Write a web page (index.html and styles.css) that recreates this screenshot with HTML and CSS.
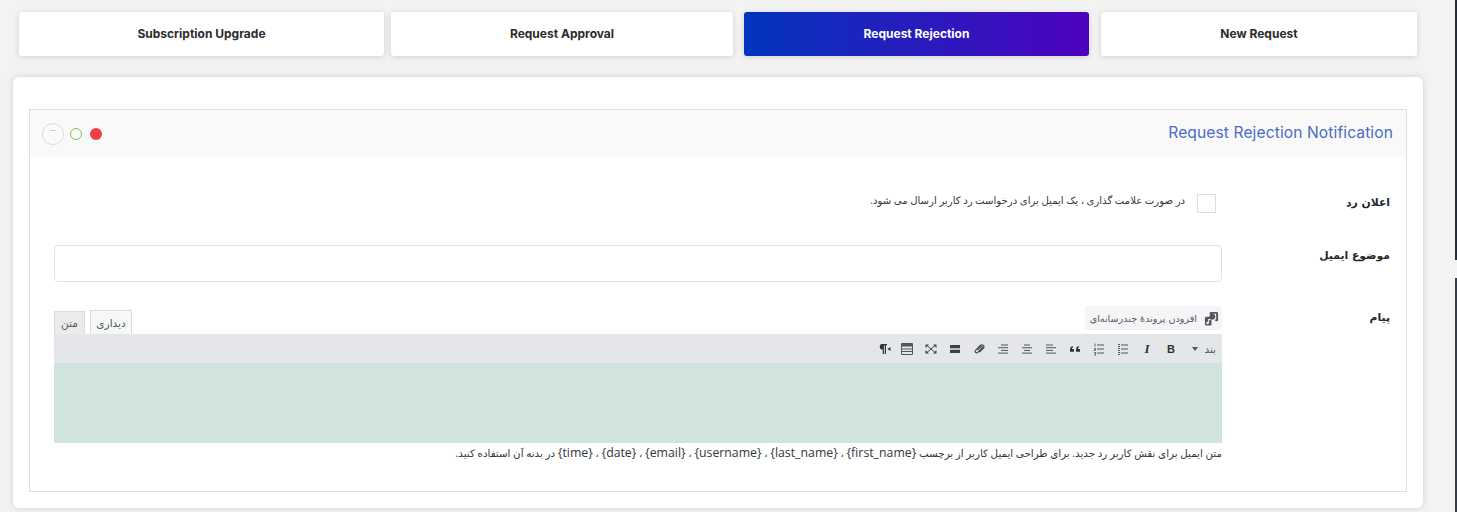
FILE: index.html
```html
<!DOCTYPE html>
<html lang="fa">
<head>
<meta charset="utf-8">
<title>Request Rejection Notification</title>
<link rel="stylesheet" href="styles.css">
</head>
<body>
<main class="page">
  <nav class="tabs">
    <a class="tab tab-a">Subscription Upgrade</a>
    <a class="tab tab-b">Request Approval</a>
    <a class="tab tab-c active">Request Rejection</a>
    <a class="tab tab-d">New Request</a>
  </nav>
  <section class="card">
    <div class="box">
      <header class="box-head">
        <div class="dots">
          <span class="dot collapse"><i></i></span>
          <span class="dot green"></span>
          <span class="dot red"></span>
        </div>
        <h2 class="title">Request Rejection Notification</h2>
      </header>
      <div class="form" dir="rtl">
        <div class="row row-check">
          <label class="label">اعلان رد</label>
          <div class="field check-field">
            <span class="checkbox"></span>
            <span class="check-text">در صورت علامت گذاری ، یک ایمیل برای درخواست رد کاربر ارسال می شود.</span>
          </div>
        </div>
        <div class="row row-subject">
          <label class="label">موضوع ایمیل</label>
          <div class="field"><input class="input" type="text"></div>
        </div>
        <div class="row">
          <label class="label label-msg">پیام</label>
          <div class="field">
            <div class="editor-top">
              <button class="media" type="button">
                <svg class="media-icon" viewBox="0 0 16 16" width="15" height="15"><path d="M6 2.500C6 1.700 6.700 1 7.500 1h6c.8 0 1.500.7 1.500 1.500v7c0 .8-.7 1.500-1.500 1.500H12V9h1V3H8v1H6z" fill="#50575e"/><circle cx="9" cy="6" r="3" fill="#50575e"/><path d="M1 7.500C1 6.700 1.700 6 2.500 6H8v8.500c0 .6-.5 1-1 1H2.500C1.700 15.500 1 14.800 1 14z" fill="#50575e"/><circle cx="3.800" cy="12.800" r="1.300" fill="#f5f5f7"/><path d="M4.500 12.800V8.500H7v1.300H5.500v3z" fill="#f5f5f7"/></svg>
                <span>افزودن پروندهٔ چندرسانه‌ای</span>
              </button>
              <div class="modes">
                <span class="mode mode-on">دیداری</span>
                <span class="mode">متن</span>
              </div>
            </div>
            <div class="toolbar">
              <span class="format">بند<i class="caret"></i></span>
              <span class="tool tool-b">B</span>
              <span class="tool tool-i">I</span>
              <span class="tool"><svg viewBox="0 0 14 14" width="14" height="14"><path d="M5 3h7M5 7h7M5 11h7" stroke="#50575e"/><path d="M2 2h2v1H2zM2 4h2v1H2zM2 6h2v1H2zM2 8h2v1H2zM2 10h2v1H2zM2 12h2v1H2z" fill="#50575e"/></svg></span>
              <span class="tool"><svg viewBox="0 0 14 14" width="14" height="14"><path d="M5 3h7M5 7h7M5 11h7" stroke="#50575e"/><path d="M3 1.500v3M2 6.500h1.500v1.700H2v.8M2 10.500h1.500v2.500H2" stroke="#50575e" stroke-width=".9" fill="none"/></svg></span>
              <span class="tool"><svg viewBox="0 0 14 14" width="14" height="14"><path d="M2 9.800V7.400C2 5.600 3 4.500 5 4.200v1.400c-.8.2-1.200.6-1.200 1.300H6v2.900zM8 9.800V7.400c0-1.800 1-2.900 3-3.200v1.400c-.8.2-1.200.6-1.200 1.300H12v2.900z" fill="#2c3338"/></svg></span>
              <span class="tool"><svg viewBox="0 0 14 14" width="14" height="14"><path d="M2 3h7M2 5.700h10M2 8.400h7M2 11.100h10" stroke="#50575e"/></svg></span>
              <span class="tool"><svg viewBox="0 0 14 14" width="14" height="14"><path d="M4 3h6M2 5.700h10M4 8.400h6M2 11.100h10" stroke="#50575e"/></svg></span>
              <span class="tool"><svg viewBox="0 0 14 14" width="14" height="14"><path d="M5 3h7M2 5.700h10M5 8.400h7M2 11.100h10" stroke="#50575e"/></svg></span>
              <span class="tool"><svg viewBox="0 0 14 14" width="14" height="14"><path d="M5.500 8.200 9 4.600c.8-.8 2 .4 1.200 1.200L5.800 10.300c-1.500 1.500-3.600-.6-2.100-2.100L8.300 3.500c2.200-2.200 5 .7 2.900 2.900L7.500 10.200" stroke="#40464d" stroke-width="1.100" fill="none"/></svg></span>
              <span class="tool"><svg viewBox="0 0 14 14" width="14" height="14"><path d="M2 3h10v3.200H2zM2 7.800h10V11H2z" fill="#3a4046"/></svg></span>
              <span class="tool"><svg viewBox="0 0 14 14" width="14" height="14"><path d="M3 3.500l8 7M11 3.500l-8 7" stroke="#40464d"/><path d="M1.500 2.500h3.500L1.500 6zM12.500 2.500H9L12.500 6zM1.500 11.500H5L1.500 8zM12.500 11.500H9L12.500 8z" fill="#40464d"/></svg></span>
              <span class="tool"><svg viewBox="0 0 14 14" width="14" height="14"><path d="M1.500 1.500h11v11h-11z" fill="none" stroke="#50575e"/><path d="M1.500 1.500h11v3h-11z" fill="#50575e"/><path d="M1.500 7h11M1.500 9.500h11" stroke="#50575e" stroke-width="1.200"/></svg></span>
              <span class="tool tool-para"><svg viewBox="0 0 14 14" width="14" height="14"><path d="M5 2h5v1.200H9V12H7.800V3.200H6.900V12H5.700V7.500H5C2 7.500 2 2 5 2z" fill="#2c3338"/><path d="M13.500 5v4L10.500 7z" fill="#2c3338"/></svg></span>
            </div>
            <div class="editor-area"></div>
            <p class="help">متن ایمیل برای نقش کاربر رد جدید. برای طراحی ایمیل کاربر از برچسب <span class="tag">{first_name}</span> ، <span class="tag">{last_name}</span> ، <span class="tag">{username}</span> ، <span class="tag">{email}</span> ، <span class="tag">{date}</span> ، <span class="tag">{time}</span> در بدنه آن استفاده کنید.</p>
          </div>
        </div>
      </div>
    </div>
  </section>
</main>
<aside class="edge"><span class="edge-top"></span><span class="edge-bottom"></span></aside>
</body>
</html>
```
FILE: styles.css
```css
* { box-sizing: border-box; }
html, body { height: 512px; overflow: hidden; }
body {
  margin: 0;
  background: #f3f3f3;
  display: flex;
  font-family: "Open Sans", "DejaVu Sans", sans-serif;
  color: #32373c;
}
.page { width: 1455px; height: 512px; padding: 12px 0 0 13px; }
.edge { width: 2px; height: 512px; display: flex; flex-direction: column; gap: 18px; }
.edge-top { height: 260px; background: #232c3b; }
.edge-bottom { flex: 1; background: #343f4d; }

.tabs { display: flex; height: 44px; padding-left: 6px; }
.tab {
  display: flex; align-items: center; justify-content: center;
  height: 44px; background: #fff; border-radius: 3px;
  box-shadow: 0 1px 6px rgba(0,0,0,.14);
  font: 700 12px "Inter", sans-serif; color: #2b2b2b; padding-bottom: 1px;
}
.tab-a { width: 365px; margin-right: 7px; }
.tab-b { width: 342px; margin-right: 11px; }
.tab-c { width: 345px; margin-right: 12px; }
.tab-d { width: 316px; }
.tab.active { background: linear-gradient(90deg, #0235bd, #4d02bd); color: #fff; }

.card {
  width: 1410px; height: 431px; margin-top: 21px; padding: 32px 16px 16px;
  background: #fff; border-radius: 6px;
  box-shadow: 0 0 7px rgba(0,0,0,.14);
}
.box { height: 383px; border: 1px solid #dfdfdf; }
.box-head {
  display: flex; align-items: center; justify-content: space-between;
  height: 47px; padding: 0 13px 0 12px; background: #f9f9f9;
}
.title { margin: 0 0 2px; font: 400 15.6px "Inter", sans-serif; color: #4a6cc6; letter-spacing: .1px; }
.dots { display: flex; align-items: center; gap: 8px; }
.dot { display: block; width: 12px; height: 12px; border-radius: 50%; }
.green { border: 1px solid #72c94a; }
.red { background: #ee4044; }
.collapse {
  width: 22px; height: 22px; border: 1px solid #ddd; background: #fafafa;
  display: flex; justify-content: center; padding-top: 6px; margin-right: -2px;
}
.collapse i { display: block; width: 6px; height: 1px; background: #ccc; }

.form { display: flex; flex-direction: column; padding: 0 15px 0 24px; }
.row { display: grid; grid-template-columns: 169px 1168px; }
.label { font: 700 10.8px "DejaVu Sans", sans-serif; color: #23282d; padding-right: 1px; }
.row-check { height: 88px; padding-top: 36px; }
.row-check .label { padding-top: 3px; }
.check-field { display: flex; align-items: flex-start; gap: 12px; }
.checkbox { width: 19px; height: 19px; margin-top: 1px; border: 1px solid #ddd; margin-right: 6px; background: #fff; flex: none; }
.check-text { font-size: 10.1px; line-height: 14px; color: #32373c; }
.row-subject { height: 61px; }
.row-subject .label { padding-top: 4px; }
.input { display: block; width: 100%; height: 37px; border: 1px solid #e2e2e2; border-radius: 4px; background: #fff; outline: 0; }
.label-msg { padding-top: 5px; }

.editor-top { display: flex; justify-content: space-between; height: 28px; }
.media {
  display: flex; align-items: center; gap: 7px; width: 137px; height: 24px; padding: 0 3px 0 0;
  border: 0; border-radius: 3px; background: #f5f5f7;
  font: 400 9.6px "DejaVu Sans", sans-serif; color: #50575e;
}
.media-icon { flex: none; }
.modes { display: flex; align-items: flex-end; gap: 5px; }
.mode {
  display: flex; align-items: center; justify-content: center;
  width: 31px; height: 23px; border: 1px solid #dcdcde; border-bottom: 0;
  background: #ebebeb; font-size: 10.5px; color: #50575e;
}
.mode-on { width: 42px; height: 24px; background: #f6f7f7; }
.toolbar {
  display: flex; align-items: center; height: 29px; padding-right: 6px;
  background: #e5e6e9;
}
.format { display: flex; align-items: center; gap: 6px; width: 33px; font-size: 10.5px; color: #50575e; }
.caret { width: 0; height: 0; border: 3px solid transparent; border-top: 4px solid #50575e; border-bottom: 0; }
.tool { display: flex; align-items: center; justify-content: center; width: 24px; height: 24px; font: 700 11px "Liberation Serif", serif; color: #2c3338; }
.tool-b { font-family: "Liberation Sans", sans-serif; }
.tool-i { font-style: italic; font-size: 13px; }
.tool-para { padding-left: 2px; }
.editor-area { height: 80px; background: #d1e3de; }
.help { margin: 2px 0 0; font-size: 10.3px; line-height: 15px; color: #32373c; }
.tag { font-size: 12.3px; }
```
